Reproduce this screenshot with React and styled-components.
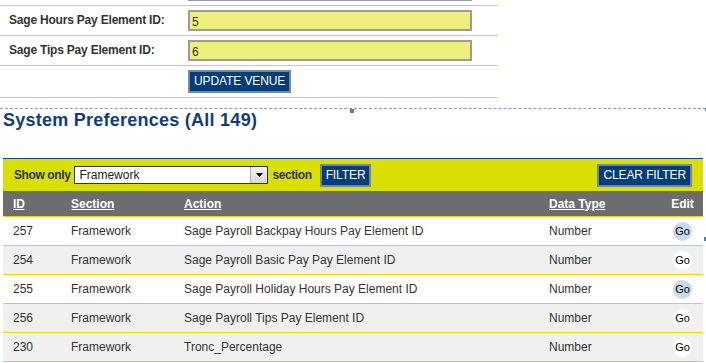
import React from "react";
import styled, { createGlobalStyle } from "styled-components";

const Global = createGlobalStyle`
  html, body { margin: 0; padding: 0; background: #fff; }
  body {
    width: 706px; height: 363px; overflow: hidden;
    font-family: "Liberation Sans", Arial, sans-serif;
    font-size: 12px; color: #333;
  }
`;

const Page = styled.div`
  display: flex;
  flex-direction: column;
`;

const FormTable = styled.div`
  width: 498px;
  margin-top: -24px;
  display: flex;
  flex-direction: column;
`;

const FormRow = styled.div`
  display: grid;
  grid-template-columns: 188px 284px;
  align-items: start;
  padding: 4px 0;
  border-bottom: 1px solid #d6d83e;
`;

const Label = styled.div`
  padding: 3px 0 0 9px;
  font-weight: bold;
  font-size: 12px;
  line-height: 14px;
  letter-spacing: -0.2px;
  color: #333;
`;

const TextInput = styled.div`
  box-sizing: border-box;
  height: 21px;
  border: 2px solid #9c9c9c;
  background: #eef07e;
  padding: 3px 0 0 2px;
  font-size: 12px;
  line-height: 14px;
  color: #333;
`;

const BlueButton = styled.button`
  box-sizing: border-box;
  height: 23px;
  padding: 0 4px;
  background: #003d7d;
  border: 2px solid #7d8794;
  color: #fff;
  font-family: "Liberation Sans", Arial, sans-serif;
  font-size: 12px;
  line-height: 17px;
  letter-spacing: -0.1px;
  cursor: pointer;
  justify-self: ${(p) => (p.$start ? "start" : "auto")};
  margin-left: ${(p) => p.$ml || 0}px;
`;

const Section = styled.div`
  position: relative;
  margin-top: 10px;
  border-top: 1px dashed #8799b6;
  padding: 0 3px;
  display: flex;
  flex-direction: column;
`;

const Handle = styled.span`
  position: absolute;
  background: #5b78a4;
`;

const Title = styled.h1`
  margin: 1px 0 0 0;
  font-size: 18px;
  line-height: 21px;
  font-weight: bold;
  letter-spacing: 0.25px;
  color: #0f3e7c;
`;

const FilterBar = styled.div`
  margin-top: 27px;
  width: 700px;
  height: 33px;
  box-sizing: border-box;
  border-top: 1px solid #14458e;
  background: #d9e000;
  display: flex;
  align-items: center;
  padding: 0 11px;
  gap: 4px;
`;

const BarText = styled.span`
  font-weight: bold;
  font-size: 12px;
  letter-spacing: -0.4px;
  color: #333;
`;

const Select = styled.div`
  box-sizing: border-box;
  width: 194px;
  height: 18px;
  border: 1px solid #333;
  background: #fff;
  display: flex;
  align-items: center;
  justify-content: space-between;
  padding-left: 4px;
  font-size: 12px;
  color: #222;
`;

const SelectArrow = styled.span`
  box-sizing: border-box;
  width: 17px;
  height: 16px;
  background: linear-gradient(#f2f2f2, #d8d8d8);
  border-left: 1px solid #b0b0b0;
  display: flex;
  align-items: center;
  justify-content: center;
`;

const Spacer = styled.div`
  flex: 1;
`;

const Table = styled.div`
  width: 700px;
  display: flex;
  flex-direction: column;
`;

const cols = "58px 113px 365px 123px 41px";

const HeadRow = styled.div`
  display: grid;
  grid-template-columns: ${cols};
  height: 25px;
  align-items: center;
  background: #6d6d6f;
  border-bottom: 1px solid #dcdc00;
`;

const HeadCell = styled.span`
  padding-left: ${(p) => (p.$center ? "0" : "10px")};
  text-align: ${(p) => (p.$center ? "center" : "left")};
  color: #fff;
  font-weight: bold;
  font-size: 12px;
  text-decoration: ${(p) => (p.$plain ? "none" : "underline")};
`;

const Row = styled.div`
  display: grid;
  grid-template-columns: ${cols};
  height: 28px;
  align-items: center;
  background: ${(p) => (p.$shade ? "#f0f0f0" : "#fff")};
  border-bottom: 1px solid #dcdc00;
`;

const Cell = styled.span`
  padding-left: 10px;
  font-size: 12px;
  color: #333;
`;

const GoCell = styled.span`
  display: flex;
  justify-content: center;
`;

const Go = styled.span`
  width: 19px;
  height: 19px;
  border-radius: 50%;
  background: ${(p) => (p.$active ? "#c9d9ee" : "#fff")};
  display: flex;
  align-items: center;
  justify-content: center;
  font-size: 11px;
  color: #000;
`;

const rows = [
  { id: 257, action: "Sage Payroll Backpay Hours Pay Element ID", shade: false, active: true },
  { id: 254, action: "Sage Payroll Basic Pay Pay Element ID", shade: true, active: false },
  { id: 255, action: "Sage Payroll Holiday Hours Pay Element ID", shade: false, active: true },
  { id: 256, action: "Sage Payroll Tips Pay Element ID", shade: true, active: false },
  { id: 230, action: "Tronc_Percentage", shade: true, active: false },
];

export default function App() {
  return (
    <Page>
      <Global />
      <FormTable>
        <FormRow>
          <span />
          <TextInput />
        </FormRow>
        <FormRow>
          <Label>Sage Hours Pay Element ID:</Label>
          <TextInput>5</TextInput>
        </FormRow>
        <FormRow>
          <Label>Sage Tips Pay Element ID:</Label>
          <TextInput>6</TextInput>
        </FormRow>
        <FormRow>
          <span />
          <BlueButton $start>UPDATE VENUE</BlueButton>
        </FormRow>
      </FormTable>

      <Section>
        <Handle style={{ top: 0, left: 350, width: 4, height: 4 }} />
        <Handle style={{ top: -1, left: 705, width: 1, height: 3 }} />
        <Handle style={{ top: 128, left: 704, width: 2, height: 4 }} />
        <Title>System Preferences (All 149)</Title>
        <FilterBar>
          <BarText>Show only</BarText>
          <Select>
            Framework
            <SelectArrow>
              <svg width="7" height="4" viewBox="0 0 7 4">
                <path d="M0 0 H7 L3.5 4 Z" fill="#000" />
              </svg>
            </SelectArrow>
          </Select>
          <BarText>section</BarText>
          <BlueButton $ml={4}>FILTER</BlueButton>
          <Spacer />
          <BlueButton>CLEAR FILTER</BlueButton>
        </FilterBar>
        <Table>
          <HeadRow>
            <HeadCell>ID</HeadCell>
            <HeadCell>Section</HeadCell>
            <HeadCell>Action</HeadCell>
            <HeadCell>Data Type</HeadCell>
            <HeadCell $center $plain>Edit</HeadCell>
          </HeadRow>
          {rows.map((r) => (
            <Row key={r.id} $shade={r.shade}>
              <Cell>{r.id}</Cell>
              <Cell>Framework</Cell>
              <Cell>{r.action}</Cell>
              <Cell>Number</Cell>
              <GoCell>
                <Go $active={r.active}>Go</Go>
              </GoCell>
            </Row>
          ))}
        </Table>
      </Section>
    </Page>
  );
}
